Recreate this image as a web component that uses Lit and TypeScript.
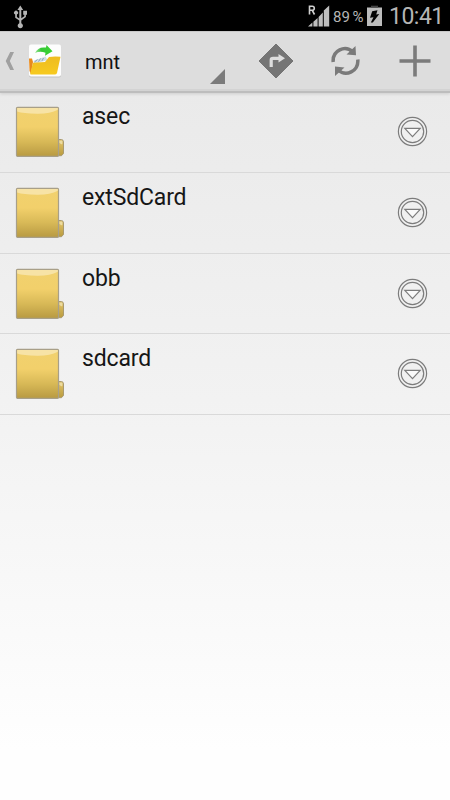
import { LitElement, html, css } from "lit";
import { customElement, property } from "lit/decorators.js";

@customElement("status-bar")
class StatusBar extends LitElement {
  static styles = css`
    :host {
      display: flex;
      align-items: center;
      height: 31px;
      background: #000;
      color: #b5b5b5;
      font-family: Roboto, sans-serif;
    }
    svg { display: block; flex: none; }
    .usb { margin: 2px 0 0 13px; }
    .signal { margin-left: auto; }
    .percent { width: 31px; margin-left: 3px; padding-top: 2px; font-size: 15px; line-height: 20px; white-space: pre; word-spacing: -1px; }
    .battery { margin-left: 3px; }
    .clock { width: 61px; margin-left: 7px; font-size: 23px; line-height: 30px; padding-top: 2px; letter-spacing: -0.5px; white-space: nowrap; }
  `;

  render() {
    return html`
      <svg class="usb" width="15" height="24" viewBox="0 0 15 24" fill="#b5b5b5">
        <path d="M7.3 0.5 L10.2 5 H8.3 V13.2 L11.3 11.2 V9.7 H10.2 V5.8 H14 V9.7 H12.9 V12 L8.3 15.5 V18.2 A2.6 2.6 0 1 1 6.3 18.2 V15.5 L2.2 12.7 V9.6 A2 2 0 1 1 3.9 9.6 V11.9 L6.3 13.5 V5 H4.4 Z" />
      </svg>
      <svg class="signal" width="22" height="24" viewBox="0 0 22 24" fill="#bebebe">
        <path d="M0 22.5 L4.4 18.5 V22.5 Z M5.4 17.8 L9.6 14 V22.5 H5.4 Z M10.6 13 L14.8 8.5 V22.5 H10.6 Z M15.8 6.5 L21.2 1.5 V22.5 H15.8 Z" />
        <path d="M1.5 10.5 V2.2 H4.3 Q6.3 2.2 6.3 4.3 Q6.3 6.3 4.3 6.3 H1.5 M4.2 6.3 L6.5 10.5" fill="none" stroke="#d0d0d0" stroke-width="1.6" />
      </svg>
      <span class="percent">89 %</span>
      <svg class="battery" width="15" height="22" viewBox="0 0 15 22">
        <path d="M0 2.5 H15 V21 H0 Z" fill="#bcbcbc" />
        <path d="M4 0.7 H11 V2.5 H4 Z" fill="#444" />
        <path d="M5.2 6.2 L10.5 5.2 L9.2 9.5 L12.3 9 L5.8 17.5 H3.8 L6.5 12.2 L3 12.7 Z" fill="#050505" />
      </svg>
      <span class="clock">10:41</span>
    `;
  }
}

@customElement("action-bar")
class ActionBar extends LitElement {
  static styles = css`
    :host {
      display: flex;
      align-items: center;
      box-sizing: border-box;
      height: 62px;
      padding-bottom: 1px;
      background: #ddd;
      border-top: 1px solid #c9c9c9;
      border-bottom: 2px solid #bdbdbd;
      box-shadow: inset 0 -2px #d3d3d3, 0 1px 3px rgba(0, 0, 0, 0.12);
      color: #111;
      font: 20px/24px Roboto, sans-serif;
      position: relative;
    }
    svg { display: block; flex: none; }
    .back { margin-left: 5px; }
    .app { margin-left: 13px; }
    .location { display: flex; align-items: center; width: 142px; height: 46px; margin-left: 23px; }
    .location span { padding-top: 1px; }
    .corner { align-self: flex-end; margin: 0 2px 0 auto; }
    .go { margin-left: 30.5px; }
    .refresh { margin-left: 37px; }
    .add { margin-left: 39px; }
  `;

  @property() path = "";

  render() {
    return html`
      <svg class="back" width="10" height="20" viewBox="0 0 10 20">
        <path d="M5.2 1 H9 L4.8 10 L9 19 H5.2 L0.7 10 Z" fill="#a0a0a0" />
      </svg>
      <svg class="app" width="34" height="34" viewBox="0 0 33 34">
        <defs>
          <linearGradient id="front" x2="0" y2="1">
            <stop stop-color="#eebc22" /><stop offset="1" stop-color="#f7ca1f" />
          </linearGradient>
          <linearGradient id="arrow" x2="1">
            <stop stop-color="#9fe59a" /><stop offset="0.35" stop-color="#35c735" /><stop offset="1" stop-color="#3bd433" />
          </linearGradient>
        </defs>
        <rect x="0.5" y="1.5" width="32" height="32" rx="2" fill="#c2c2c2" />
        <rect x="0.5" y="0.5" width="32" height="32" rx="2" fill="#fdfdfd" />
        <path d="M0.5 14.5 H3.5 L4.5 18 L2.5 30 L1 27 Z" fill="#e98a1c" />
        <path d="M5 16.8 L17 12.5 L19 16 L5.5 20 Z" fill="#d0dce5" />
        <path d="M6 18 L9 15.5 M10 17.6 L12 14.5 M13.5 16.8 L15 14" stroke="#8ba3b7" stroke-width="1" />
        <path d="M4.5 18.8 L16.5 18 L20.5 13 Q26 12 32 12.8 L28.5 29 Q28 30.5 26 30.5 H2.5 Q1.4 30.5 1.8 29 Z" fill="url(#front)" />
        <path d="M6.5 9 Q9.5 2.3 17.5 3.6 L18 1 L24 7.2 L16.5 11.8 L17 8.7 Q11.5 6.8 6.5 9 Z" fill="url(#arrow)" />
      </svg>
      <div class="location">
        <span>${this.path}</span>
        <svg class="corner" width="15" height="15" viewBox="0 0 15 15">
          <path d="M15 0 V15 H0 Z" fill="#7b7b7b" />
        </svg>
      </div>
      <svg class="go" width="36" height="36" viewBox="0 0 36 36">
        <path d="M18 1 L35 18 L18 35 L1 18 Z" fill="#757575" stroke="#757575" stroke-linejoin="round" />
        <path d="M13.2 24 V17 Q13.2 15.3 15 15.3 H21" fill="none" stroke="#ddd" stroke-width="3.2" />
        <path d="M20.5 11 L27 15.3 L20.5 19.6 Z" fill="#ddd" />
      </svg>
      <svg class="refresh" width="29" height="32" viewBox="0 0 29 32">
        <path d="M2.2 17 C1.3 5.5 14 -0.5 22 7.2 M26.8 14.5 C27.7 26.5 15 32 7 25" fill="none" stroke="#7a7a7a" stroke-width="3.5" />
        <path d="M24.5 1 L25 10.3 L15.5 9.5 Z M4 31 V21.5 L13.5 22.5 Z" fill="#7a7a7a" />
      </svg>
      <svg class="add" width="32" height="32" viewBox="0 0 32 32">
        <path d="M14.2 0.5 H17.8 V14.2 H31.5 V17.8 H17.8 V31.5 H14.2 V17.8 H0.5 V14.2 H14.2 Z" fill="#7b7b7b" />
      </svg>
    `;
  }
}

@customElement("folder-row")
class FolderRow extends LitElement {
  static styles = css`
    :host {
      display: flex;
      align-items: flex-start;
      box-sizing: border-box;
      height: 80.75px;
      border-bottom: 1px solid #d9d9d9;
      color: #161616;
      font: 23px/28px Roboto, sans-serif;
      letter-spacing: -0.15px;
    }
    svg { display: block; flex: none; }
    .folder { margin: 14px 0 0 15px; }
    .name { margin: 11px 0 0 17px; }
    .more { margin: 24px 22px 0 auto; }
  `;

  @property() name = "";

  render() {
    return html`
      <svg class="folder" width="50" height="52" viewBox="0 0 50 52">
        <defs>
          <linearGradient id="body" x2="0" y2="1">
            <stop stop-color="#f1d16e" /><stop offset="0.4" stop-color="#f2d06b" />
            <stop offset="0.7" stop-color="#d8b957" /><stop offset="1" stop-color="#b89a42" />
          </linearGradient>
          <linearGradient id="tab" x2="0" y2="1">
            <stop stop-color="#e5cd83" /><stop offset="0.3" stop-color="#d7b85c" /><stop offset="1" stop-color="#b99b40" />
          </linearGradient>
        </defs>
        <path d="M41 33.5 H46.5 Q48.5 33.7 48.5 36 V47.5 L46.5 49.7 H41 Z" fill="url(#tab)" stroke="#a99a70" />
        <rect x="1.5" y="1.3" width="42" height="49" rx="1" fill="url(#body)" stroke="#a89f88" stroke-width="1.2" />
        <path d="M2.2 2 H42.8 V3.8 Q35 8 22 7.8 Q8 7.5 2.2 5.5 Z" fill="#f7e3a6" />
        <path d="M44.5 35 H47.3 V38 Q46 39 44.5 36.5 Z" fill="#ecdba1" />
      </svg>
      <span class="name">${this.name}</span>
      <svg class="more" width="31" height="31" viewBox="0 0 31 31" fill="#f0f0f0" stroke="#7c7c7c">
        <circle cx="15.5" cy="15.5" r="14.1" stroke-width="1.2" />
        <circle cx="15.5" cy="15.5" r="11.2" stroke-width="1.2" />
        <path d="M7.8 12.3 H23.2 L15.5 20.6 Z" fill="#fafafa" stroke-width="1.2" />
      </svg>
    `;
  }
}

@customElement("app-root")
class AppRoot extends LitElement {
  static styles = css`
    :host {
      display: block;
      height: 800px;
      overflow: hidden;
      background: linear-gradient(#eaeaea 92px, #f2f2f2 400px, #fefefe 750px);
    }
    main { margin-top: -1px; }
  `;

  private folders = ["asec", "extSdCard", "obb", "sdcard"];

  render() {
    return html`
      <status-bar></status-bar>
      <action-bar path="mnt"></action-bar>
      <main>${this.folders.map((name) => html`<folder-row .name=${name}></folder-row>`)}</main>
    `;
  }
}
